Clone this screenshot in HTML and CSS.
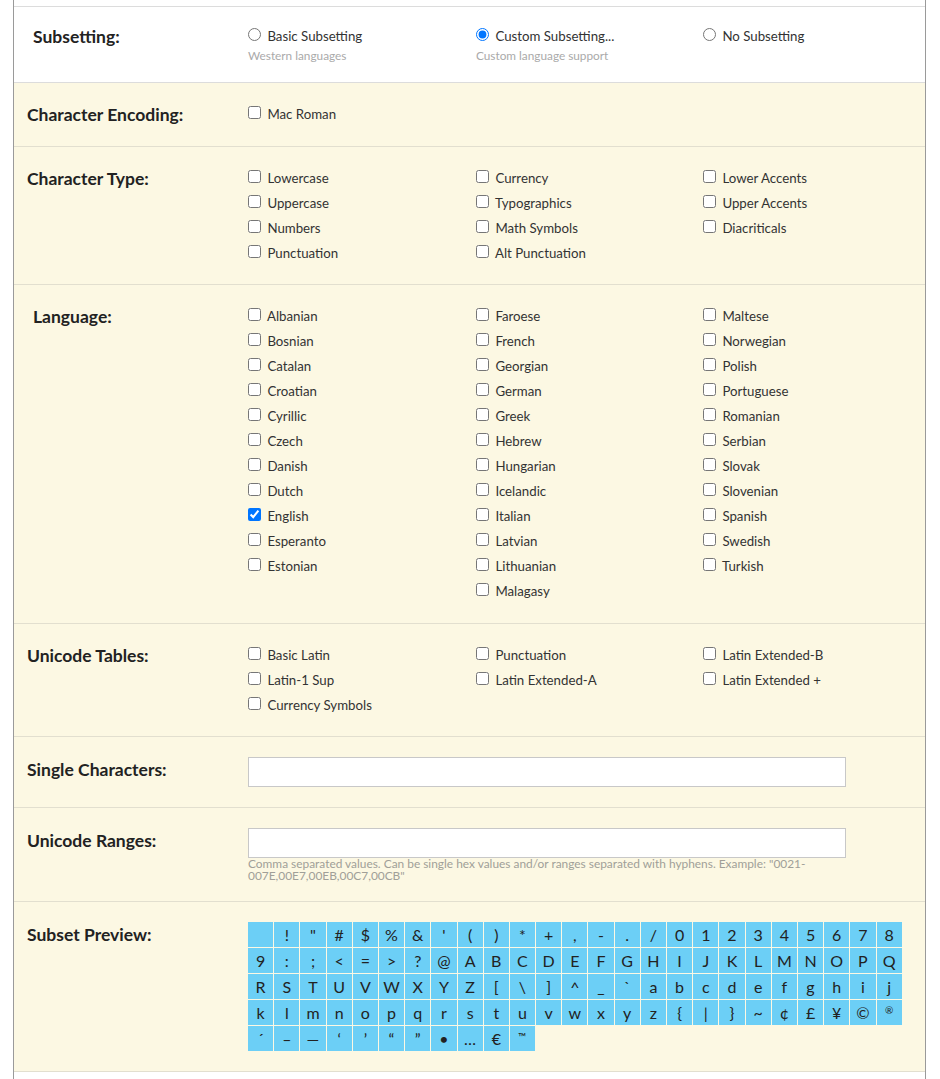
FILE: index.html
```html
<!DOCTYPE html>
<html>
<head>
<meta charset="utf-8">
<link rel="stylesheet" href="styles.css">
</head>
<body>
<div class="panel">
  <div class="top-spacer"></div>

  <div class="row row-white">
    <div class="label label-indent">Subsetting:</div>
    <div class="opts">
      <div class="col">
        <label class="opt"><input type="radio" name="sub"> Basic Subsetting</label>
        <div class="sub">Western languages</div>
      </div>
      <div class="col">
        <label class="opt"><input type="radio" name="sub" checked> Custom Subsetting...</label>
        <div class="sub">Custom language support</div>
      </div>
      <div class="col">
        <label class="opt"><input type="radio" name="sub"> No Subsetting</label>
      </div>
    </div>
  </div>

  <div class="row">
    <div class="label">Character Encoding:</div>
    <div class="opts">
      <div class="col">
        <label class="opt"><input type="checkbox"> Mac Roman</label>
      </div>
    </div>
  </div>

  <div class="row">
    <div class="label">Character Type:</div>
    <div class="opts">
      <div class="col">
        <label class="opt"><input type="checkbox"> Lowercase</label>
        <label class="opt"><input type="checkbox"> Uppercase</label>
        <label class="opt"><input type="checkbox"> Numbers</label>
        <label class="opt"><input type="checkbox"> Punctuation</label>
      </div>
      <div class="col">
        <label class="opt"><input type="checkbox"> Currency</label>
        <label class="opt"><input type="checkbox"> Typographics</label>
        <label class="opt"><input type="checkbox"> Math Symbols</label>
        <label class="opt"><input type="checkbox"> Alt Punctuation</label>
      </div>
      <div class="col">
        <label class="opt"><input type="checkbox"> Lower Accents</label>
        <label class="opt"><input type="checkbox"> Upper Accents</label>
        <label class="opt"><input type="checkbox"> Diacriticals</label>
      </div>
    </div>
  </div>

  <div class="row">
    <div class="label label-indent">Language:</div>
    <div class="opts">
      <div class="col">
        <label class="opt"><input type="checkbox"> Albanian</label>
        <label class="opt"><input type="checkbox"> Bosnian</label>
        <label class="opt"><input type="checkbox"> Catalan</label>
        <label class="opt"><input type="checkbox"> Croatian</label>
        <label class="opt"><input type="checkbox"> Cyrillic</label>
        <label class="opt"><input type="checkbox"> Czech</label>
        <label class="opt"><input type="checkbox"> Danish</label>
        <label class="opt"><input type="checkbox"> Dutch</label>
        <label class="opt"><input type="checkbox" checked> English</label>
        <label class="opt"><input type="checkbox"> Esperanto</label>
        <label class="opt"><input type="checkbox"> Estonian</label>
      </div>
      <div class="col">
        <label class="opt"><input type="checkbox"> Faroese</label>
        <label class="opt"><input type="checkbox"> French</label>
        <label class="opt"><input type="checkbox"> Georgian</label>
        <label class="opt"><input type="checkbox"> German</label>
        <label class="opt"><input type="checkbox"> Greek</label>
        <label class="opt"><input type="checkbox"> Hebrew</label>
        <label class="opt"><input type="checkbox"> Hungarian</label>
        <label class="opt"><input type="checkbox"> Icelandic</label>
        <label class="opt"><input type="checkbox"> Italian</label>
        <label class="opt"><input type="checkbox"> Latvian</label>
        <label class="opt"><input type="checkbox"> Lithuanian</label>
        <label class="opt"><input type="checkbox"> Malagasy</label>
      </div>
      <div class="col">
        <label class="opt"><input type="checkbox"> Maltese</label>
        <label class="opt"><input type="checkbox"> Norwegian</label>
        <label class="opt"><input type="checkbox"> Polish</label>
        <label class="opt"><input type="checkbox"> Portuguese</label>
        <label class="opt"><input type="checkbox"> Romanian</label>
        <label class="opt"><input type="checkbox"> Serbian</label>
        <label class="opt"><input type="checkbox"> Slovak</label>
        <label class="opt"><input type="checkbox"> Slovenian</label>
        <label class="opt"><input type="checkbox"> Spanish</label>
        <label class="opt"><input type="checkbox"> Swedish</label>
        <label class="opt"><input type="checkbox"> Turkish</label>
      </div>
    </div>
  </div>

  <div class="row">
    <div class="label">Unicode Tables:</div>
    <div class="opts">
      <div class="col">
        <label class="opt"><input type="checkbox"> Basic Latin</label>
        <label class="opt"><input type="checkbox"> Latin-1 Sup</label>
        <label class="opt"><input type="checkbox"> Currency Symbols</label>
      </div>
      <div class="col">
        <label class="opt"><input type="checkbox"> Punctuation</label>
        <label class="opt"><input type="checkbox"> Latin Extended-A</label>
      </div>
      <div class="col">
        <label class="opt"><input type="checkbox"> Latin Extended-B</label>
        <label class="opt"><input type="checkbox"> Latin Extended +</label>
      </div>
    </div>
  </div>

  <div class="row row-input">
    <div class="label">Single Characters:</div>
    <div class="field">
      <input class="text" type="text">
    </div>
  </div>

  <div class="row row-input">
    <div class="label">Unicode Ranges:</div>
    <div class="field">
      <input class="text" type="text">
      <div class="hint">Comma separated values. Can be single hex values and/or ranges separated with hyphens. Example: "0021-007E,00E7,00EB,00C7,00CB"</div>
    </div>
  </div>

  <div class="row row-input">
    <div class="label">Subset Preview:</div>
    <div class="preview">
      <span class="ch">&nbsp;</span><span class="ch">!</span><span class="ch">"</span><span class="ch">#</span><span class="ch">$</span><span class="ch">%</span><span class="ch">&amp;</span><span class="ch">'</span><span class="ch">(</span><span class="ch">)</span><span class="ch">*</span><span class="ch">+</span><span class="ch">,</span><span class="ch">-</span><span class="ch">.</span><span class="ch">/</span><span class="ch">0</span><span class="ch">1</span><span class="ch">2</span><span class="ch">3</span><span class="ch">4</span><span class="ch">5</span><span class="ch">6</span><span class="ch">7</span><span class="ch">8</span>
      <span class="ch">9</span><span class="ch">:</span><span class="ch">;</span><span class="ch">&lt;</span><span class="ch">=</span><span class="ch">&gt;</span><span class="ch">?</span><span class="ch">@</span><span class="ch">A</span><span class="ch">B</span><span class="ch">C</span><span class="ch">D</span><span class="ch">E</span><span class="ch">F</span><span class="ch">G</span><span class="ch">H</span><span class="ch">I</span><span class="ch">J</span><span class="ch">K</span><span class="ch">L</span><span class="ch">M</span><span class="ch">N</span><span class="ch">O</span><span class="ch">P</span><span class="ch">Q</span>
      <span class="ch">R</span><span class="ch">S</span><span class="ch">T</span><span class="ch">U</span><span class="ch">V</span><span class="ch">W</span><span class="ch">X</span><span class="ch">Y</span><span class="ch">Z</span><span class="ch">[</span><span class="ch">\</span><span class="ch">]</span><span class="ch">^</span><span class="ch">_</span><span class="ch">`</span><span class="ch">a</span><span class="ch">b</span><span class="ch">c</span><span class="ch">d</span><span class="ch">e</span><span class="ch">f</span><span class="ch">g</span><span class="ch">h</span><span class="ch">i</span><span class="ch">j</span>
      <span class="ch">k</span><span class="ch">l</span><span class="ch">m</span><span class="ch">n</span><span class="ch">o</span><span class="ch">p</span><span class="ch">q</span><span class="ch">r</span><span class="ch">s</span><span class="ch">t</span><span class="ch">u</span><span class="ch">v</span><span class="ch">w</span><span class="ch">x</span><span class="ch">y</span><span class="ch">z</span><span class="ch">{</span><span class="ch">|</span><span class="ch">}</span><span class="ch">~</span><span class="ch">¢</span><span class="ch">£</span><span class="ch">¥</span><span class="ch">©</span><span class="ch small">®</span>
      <span class="ch">´</span><span class="ch">–</span><span class="ch">—</span><span class="ch">‘</span><span class="ch">’</span><span class="ch">“</span><span class="ch">”</span><span class="ch">•</span><span class="ch">…</span><span class="ch">€</span><span class="ch tm">™</span>
    </div>
  </div>
  <div class="bottom-spacer"></div>
</div>
</body>
</html>
```

FILE: styles.css
```css
html, body {
  margin: 0;
  padding: 0;
  background: #ffffff;
}

body {
  font-family: Lato, "Liberation Sans", sans-serif;
  color: #333333;
}

.panel {
  margin-left: 13px;
  width: 913px;
  box-sizing: border-box;
  border-left: 1px solid #9a9a9a;
  border-right: 1px solid #9a9a9a;
  background: #ffffff;
}

.top-spacer {
  height: 6px;
  border-bottom: 1px solid #dcdcdc;
}

.bottom-spacer {
  height: 7px;
}

.row {
  display: grid;
  grid-template-columns: 234px 1fr;
  padding: 19px 0 18.5px;
  background: #fcf8e3;
  border-bottom: 1px solid #e2dfcf;
}

.row-white {
  background: #ffffff;
  border-bottom-color: #dcdcdc;
  padding: 17px 0 19px;
}

.row-input {
  padding: 20px 0 19.5px;
}

.label {
  padding-left: 13px;
  font-size: 17.5px;
  font-weight: 700;
  line-height: 25px;
  color: #222222;
}

.label-indent {
  padding-left: 19px;
}

.opts {
  display: grid;
  grid-template-columns: 228px 227px 1fr;
}

.col {
  display: flex;
  flex-direction: column;
}

.opt {
  display: block;
  height: 25px;
  line-height: 25px;
  font-size: 13.25px;
  color: #333333;
  white-space: nowrap;
}

.opt input {
  margin: 3px 3px 3px 0;
}

.sub {
  font-size: 11.8px;
  line-height: 14px;
  color: #aaaaaa;
}

.field {
  width: 598px;
}

.text {
  display: block;
  box-sizing: border-box;
  width: 598px;
  height: 30px;
  margin: 0;
  border: 1px solid #c8c8c8;
  background: #ffffff;
}

.hint {
  font-size: 11.9px;
  line-height: 12px;
  color: #a09f98;
  padding-right: 30px;
}

.preview {
  display: grid;
  grid-template-columns: repeat(25, 25.2px);
  grid-auto-rows: 25px;
  gap: 1px;
}

.ch {
  display: flex;
  align-items: center;
  justify-content: center;
  background: #6ccff6;
  font-size: 16px;
  color: #222222;
}

.ch.small {
  font-size: 10px;
  align-items: flex-start;
  padding-top: 4px;
}

.ch.tm {
  font-size: 11px;
  align-items: flex-start;
  padding-top: 4px;
}
```
